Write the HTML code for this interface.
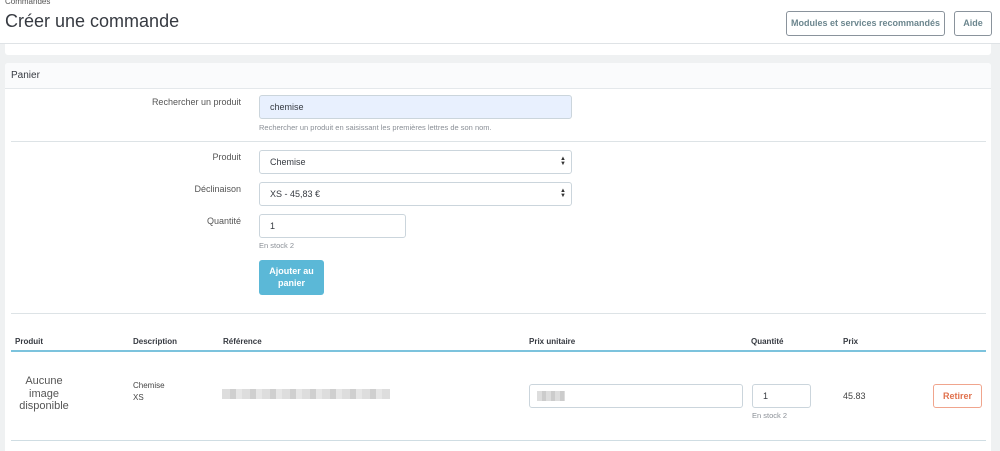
<!DOCTYPE html>
<html><head><meta charset="utf-8"><style>
*{box-sizing:border-box;margin:0;padding:0}
html,body{width:1000px;height:451px;overflow:hidden}
body{background:#eff1f2;font-family:"Liberation Sans",sans-serif;color:#363a41;position:relative}
.a{position:absolute}
.hdr{left:0;top:0;width:1000px;height:44px;background:#fff;border-bottom:1px solid #dfe3e6}
.btn{border:1px solid #8a939c;border-radius:3px;background:#fff;color:#6c868e;font-size:9px;font-weight:bold;text-align:center;line-height:23px;height:25px;white-space:nowrap}
.lbl{font-size:9px;color:#555;text-align:right;width:90px}
.inp{border:1px solid #cbd5dc;border-radius:3px;background:#fff;font-size:9px;color:#363a41;padding-left:10px;height:24px;line-height:22px}
.help{font-size:7.5px;color:#8a8f96}
.th{font-size:8px;font-weight:bold;color:#363a41}
.arr{position:absolute;right:5px;top:6px;font-size:6px;line-height:5px;color:#333}
</style></head><body>
<div class="a hdr">
 <div class="a" style="left:5px;top:-3px;font-size:8px;color:#555">Commandes</div>
 <div class="a" style="left:5px;top:11px;font-size:18px;color:#363a41">Créer une commande</div>
 <div class="a btn" style="left:786px;top:11px;width:159px">Modules et services recommandés</div>
 <div class="a btn" style="left:954px;top:11px;width:38px">Aide</div>
</div>
<div class="a" style="left:5px;top:44px;width:986px;height:11px;background:#fff;border-radius:0 0 3px 3px"></div>
<div class="a" style="left:5px;top:63px;width:986px;height:388px;background:#fff;border-radius:3px 3px 0 0">
 <div class="a" style="left:0;top:0;width:986px;height:26px;background:#fafbfc;border-bottom:1px solid #e4e8eb;border-radius:3px 3px 0 0"></div>
 <div class="a" style="left:6px;top:7px;font-size:10px;color:#363a41">Panier</div>
</div>
<div class="a lbl" style="left:151px;top:97px">Rechercher un produit</div>
<div class="a inp" style="left:259px;top:95px;width:313px;background:#e8f0fe">chemise</div>
<div class="a help" style="left:259px;top:123px">Rechercher un produit en saisissant les premières lettres de son nom.</div>
<div class="a" style="left:11px;top:141px;width:975px;height:1px;background:#dde3e6"></div>
<div class="a lbl" style="left:151px;top:152px">Produit</div>
<div class="a inp" style="left:259px;top:150px;width:313px">Chemise<div class="arr">▲<br>▼</div></div>
<div class="a lbl" style="left:151px;top:184px">Déclinaison</div>
<div class="a inp" style="left:259px;top:182px;width:313px">XS - 45,83 €<div class="arr">▲<br>▼</div></div>
<div class="a lbl" style="left:151px;top:216px">Quantité</div>
<div class="a inp" style="left:259px;top:214px;width:147px">1</div>
<div class="a help" style="left:259px;top:241px">En stock 2</div>
<div class="a" style="left:259px;top:260px;width:65px;height:35px;background:#5bb8d7;border-radius:3px;color:#fff;font-size:9px;font-weight:bold;text-align:center;line-height:12px;padding-top:5px">Ajouter au<br>panier</div>
<div class="a" style="left:11px;top:313px;width:975px;height:1px;background:#dde3e6"></div>
<div class="a th" style="left:15px;top:337px">Produit</div>
<div class="a th" style="left:133px;top:337px">Description</div>
<div class="a th" style="left:223px;top:337px">Référence</div>
<div class="a th" style="left:529px;top:337px">Prix unitaire</div>
<div class="a th" style="left:751px;top:337px">Quantité</div>
<div class="a th" style="left:843px;top:337px">Prix</div>
<div class="a" style="left:11px;top:350px;width:975px;height:2px;background:#7cc3dd"></div>
<div class="a" style="left:4px;top:375px;width:80px;text-align:center;font-size:11px;color:#555;line-height:12.5px">Aucune<br>image<br>disponible</div>
<div class="a" style="left:133px;top:380px;font-size:8px;color:#444;line-height:12px">Chemise<br>XS</div>
<div class="a" style="left:222px;top:389px;width:168px;height:10px;background:repeating-linear-gradient(90deg,#ddd 0 8px,#cfcfcf 8px 14px,#e6e6e6 14px 20px)"></div>
<div class="a inp" style="left:529px;top:384px;width:214px"></div>
<div class="a" style="left:537px;top:391px;width:28px;height:10px;background:repeating-linear-gradient(90deg,#ddd 0 5px,#ccc 5px 9px)"></div>
<div class="a inp" style="left:752px;top:384px;width:59px">1</div>
<div class="a help" style="left:752px;top:411px">En stock 2</div>
<div class="a" style="left:843px;top:391px;font-size:9px;color:#444">45.83</div>
<div class="a" style="left:933px;top:384px;width:49px;height:24px;border:1px solid #f0a58d;border-radius:3px;color:#e0714d;font-size:9px;font-weight:bold;text-align:center;line-height:22px">Retirer</div>
<div class="a" style="left:11px;top:440px;width:975px;height:1px;background:#cfdde3"></div>
</body></html>
